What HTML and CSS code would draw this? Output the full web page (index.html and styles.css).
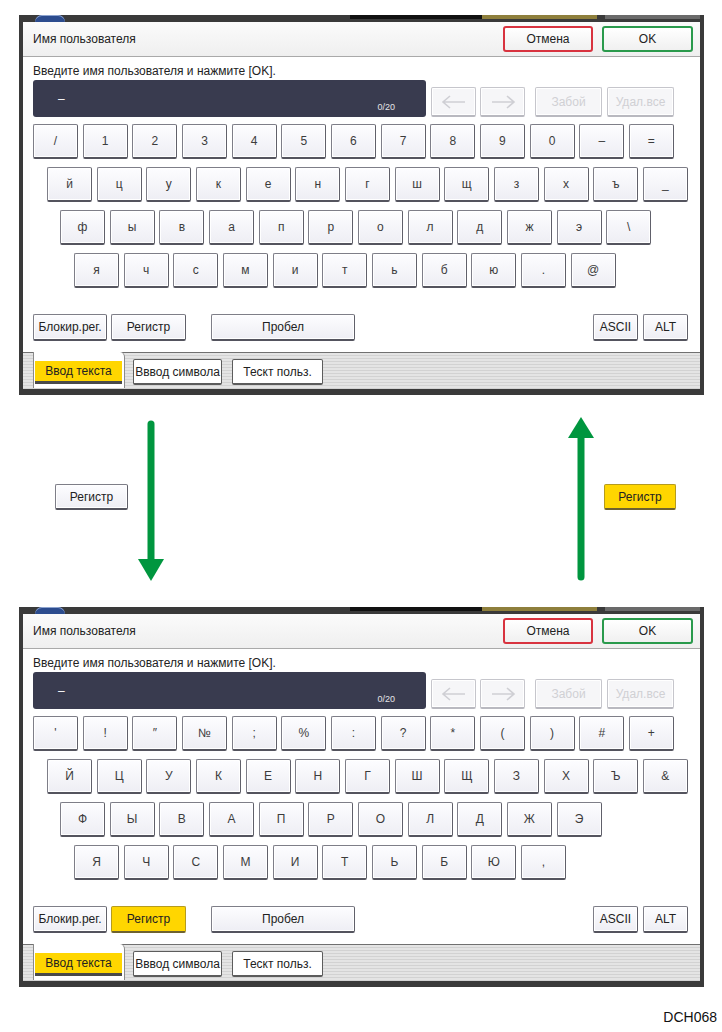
FILE: index.html
```html
<!DOCTYPE html>
<html lang="ru">
<head>
  <meta charset="UTF-8">
  <title>Ввод текста - Регистр</title>
  <link rel="stylesheet" href="styles.css">
</head>
<body>

  <!-- Screen 1: lower case -->
  <div class="screen">
    <div class="screen-top">
      <span class="lamp"></span>
      <span class="bar-black"></span>
      <span class="bar-gold"></span>
      <span class="bar-gray"></span>
    </div>
    <div class="dialog">
      <div class="title-bar">
        <h1>Имя пользователя</h1>
        <button class="btn-cancel">Отмена</button>
        <button class="btn-ok">OK</button>
      </div>
      <p class="prompt">Введите имя пользователя и нажмите [OK].</p>
      <div class="input-row">
        <div class="input"><span class="cursor">–</span><span class="counter">0/20</span></div>
        <span class="key off arrow first"><svg width="26" height="14" viewBox="0 0 26 14"><path d="M2 7H24M9 1L2 7L9 13" fill="none" stroke="#cfcfd4" stroke-width="1.6"/></svg></span>
        <span class="key off arrow"><svg width="26" height="14" viewBox="0 0 26 14"><path d="M2 7H24M17 1L24 7L17 13" fill="none" stroke="#cfcfd4" stroke-width="1.6"/></svg></span>
        <span class="key off wide gap">Забой</span>
        <span class="key off wide">Удал.все</span>
      </div>
      <div class="keys">
        <div class="row r1">
          <span class="key">/</span><span class="key">1</span><span class="key">2</span><span class="key">3</span><span class="key">4</span><span class="key">5</span><span class="key">6</span><span class="key">7</span><span class="key">8</span><span class="key">9</span><span class="key">0</span><span class="key">–</span><span class="key">=</span>
        </div>
        <div class="row r2">
          <span class="key">й</span><span class="key">ц</span><span class="key">у</span><span class="key">к</span><span class="key">е</span><span class="key">н</span><span class="key">г</span><span class="key">ш</span><span class="key">щ</span><span class="key">з</span><span class="key">х</span><span class="key">ъ</span><span class="key">_</span>
        </div>
        <div class="row r3">
          <span class="key">ф</span><span class="key">ы</span><span class="key">в</span><span class="key">а</span><span class="key">п</span><span class="key">р</span><span class="key">о</span><span class="key">л</span><span class="key">д</span><span class="key">ж</span><span class="key">э</span><span class="key">\</span>
        </div>
        <div class="row r4">
          <span class="key">я</span><span class="key">ч</span><span class="key">с</span><span class="key">м</span><span class="key">и</span><span class="key">т</span><span class="key">ь</span><span class="key">б</span><span class="key">ю</span><span class="key">.</span><span class="key">@</span>
        </div>
      </div>
      <div class="func-row">
        <span class="key f-lock">Блокир.рег.</span>
        <span class="key f-shift">Регистр</span>
        <span class="key f-space">Пробел</span>
        <span class="key f-ascii">ASCII</span>
        <span class="key f-alt">ALT</span>
      </div>
    </div>
    <div class="tabs">
      <div class="tab-active"><span class="tab-on">Ввод текста</span></div>
      <span class="tab t-symbol">Вввод символа</span>
      <span class="tab t-user">Тескт польз.</span>
    </div>
  </div>

  <!-- Shift switch -->
  <div class="switch">
    <span class="key reg">Регистр</span>
    <svg class="arrow-down" width="26" height="161" viewBox="0 0 26 161">
      <line x1="13" y1="4" x2="13" y2="142" stroke="#00963f" stroke-width="7" stroke-linecap="round"/>
      <polygon points="0,139 26,139 13,161" fill="#00963f"/>
    </svg>
    <svg class="arrow-up" width="26" height="164" viewBox="0 0 26 164">
      <polygon points="13,0 0,21 26,21" fill="#00963f"/>
      <line x1="13" y1="18" x2="13" y2="160" stroke="#00963f" stroke-width="7" stroke-linecap="round"/>
    </svg>
    <span class="key reg yellow">Регистр</span>
  </div>

  <!-- Screen 2: upper case -->
  <div class="screen">
    <div class="screen-top">
      <span class="lamp"></span>
      <span class="bar-black"></span>
      <span class="bar-gold"></span>
      <span class="bar-gray"></span>
    </div>
    <div class="dialog">
      <div class="title-bar">
        <h1>Имя пользователя</h1>
        <button class="btn-cancel">Отмена</button>
        <button class="btn-ok">OK</button>
      </div>
      <p class="prompt">Введите имя пользователя и нажмите [OK].</p>
      <div class="input-row">
        <div class="input"><span class="cursor">–</span><span class="counter">0/20</span></div>
        <span class="key off arrow first"><svg width="26" height="14" viewBox="0 0 26 14"><path d="M2 7H24M9 1L2 7L9 13" fill="none" stroke="#cfcfd4" stroke-width="1.6"/></svg></span>
        <span class="key off arrow"><svg width="26" height="14" viewBox="0 0 26 14"><path d="M2 7H24M17 1L24 7L17 13" fill="none" stroke="#cfcfd4" stroke-width="1.6"/></svg></span>
        <span class="key off wide gap">Забой</span>
        <span class="key off wide">Удал.все</span>
      </div>
      <div class="keys">
        <div class="row r1">
          <span class="key">'</span><span class="key">!</span><span class="key">″</span><span class="key">№</span><span class="key">;</span><span class="key">%</span><span class="key">:</span><span class="key">?</span><span class="key">*</span><span class="key">(</span><span class="key">)</span><span class="key">#</span><span class="key">+</span>
        </div>
        <div class="row r2">
          <span class="key">Й</span><span class="key">Ц</span><span class="key">У</span><span class="key">К</span><span class="key">Е</span><span class="key">Н</span><span class="key">Г</span><span class="key">Ш</span><span class="key">Щ</span><span class="key">З</span><span class="key">Х</span><span class="key">Ъ</span><span class="key">&amp;</span>
        </div>
        <div class="row r3">
          <span class="key">Ф</span><span class="key">Ы</span><span class="key">В</span><span class="key">А</span><span class="key">П</span><span class="key">Р</span><span class="key">О</span><span class="key">Л</span><span class="key">Д</span><span class="key">Ж</span><span class="key">Э</span>
        </div>
        <div class="row r4">
          <span class="key">Я</span><span class="key">Ч</span><span class="key">С</span><span class="key">М</span><span class="key">И</span><span class="key">Т</span><span class="key">Ь</span><span class="key">Б</span><span class="key">Ю</span><span class="key">,</span>
        </div>
      </div>
      <div class="func-row">
        <span class="key f-lock">Блокир.рег.</span>
        <span class="key f-shift yellow">Регистр</span>
        <span class="key f-space">Пробел</span>
        <span class="key f-ascii">ASCII</span>
        <span class="key f-alt">ALT</span>
      </div>
    </div>
    <div class="tabs">
      <div class="tab-active"><span class="tab-on">Ввод текста</span></div>
      <span class="tab t-symbol">Вввод символа</span>
      <span class="tab t-user">Тескт польз.</span>
    </div>
  </div>

  <div class="fig-id">DCH068</div>

</body>
</html>
```

FILE: styles.css
```css
body {
  margin: 0;
  background: #fff;
  font-family: "Liberation Sans", Arial, sans-serif;
  font-size: 12px;
  color: #222;
  width: 722px;
}

/* Screen frame */
.screen {
  margin: 15px 0 0 19px;
  width: 685px;
  height: 380px;
  box-sizing: border-box;
  background: #3a3a3a;
  padding: 0 4px 6px;
  display: flex;
  flex-direction: column;
}

.switch + .screen {
  margin-top: 0;
}

.screen-top {
  height: 7px;
  display: flex;
  align-items: flex-start;
}

.lamp {
  width: 30px;
  height: 7px;
  margin-left: 12px;
  background: #2c4c8e;
  border-radius: 15px 15px 0 0;
  box-shadow: inset 0 1px 0 #8ea4cf;
}

.bar-black {
  width: 132px;
  height: 4px;
  margin-left: 285px;
  background: #111;
}

.bar-gold {
  width: 115px;
  height: 4px;
  background: #8e7f3c;
}

.bar-gray {
  width: 95px;
  height: 4px;
  margin-left: 8px;
  background: #6a6a6a;
}

/* Dialog */
.dialog {
  background: #fff;
  height: 330px;
  display: flex;
  flex-direction: column;
}

.title-bar {
  height: 35px;
  box-sizing: border-box;
  border-bottom: 1px solid #a9a9a9;
  background: linear-gradient(#fbfbfb, #efefef);
  display: flex;
  align-items: center;
  padding: 0 7px 0 10px;
}

.title-bar h1 {
  flex: 1;
  margin: 0;
  font-size: 12px;
  font-weight: normal;
  color: #222;
}

.btn-cancel,
.btn-ok {
  height: 26px;
  box-sizing: border-box;
  border-radius: 3px;
  background: linear-gradient(#ffffff, #f0f0f0);
  font-family: "Liberation Sans", Arial, sans-serif;
  font-size: 12px;
  color: #222;
  padding: 0;
}

.btn-cancel {
  width: 90px;
  margin-right: 9px;
  border: 2px solid #d8333f;
}

.btn-ok {
  width: 91px;
  border: 2px solid #2a9a4c;
}

.prompt {
  margin: 7px 0 0 10px;
  line-height: 14px;
}

.input-row {
  display: flex;
  align-items: flex-end;
  height: 37px;
  margin-top: 2px;
}

.input {
  width: 393px;
  height: 37px;
  margin-left: 10px;
  box-sizing: border-box;
  background: #393b4f;
  border-radius: 3px;
  display: flex;
  justify-content: space-between;
  padding: 0 31px 0 25px;
  color: #fff;
}

.cursor {
  align-self: center;
  font-size: 12px;
}

.counter {
  align-self: flex-end;
  margin-bottom: 5px;
  font-size: 9px;
  color: #e4e4e8;
}

/* Keys */
.key {
  width: 45px;
  height: 35px;
  box-sizing: border-box;
  border: 1px solid #7e7e88;
  border-bottom: 2px solid #54545e;
  border-right-color: #60606a;
  border-radius: 2px;
  background: linear-gradient(#fdfdff, #eeeef4);
  box-shadow: inset 0 0 0 1px #fff;
  display: flex;
  align-items: center;
  justify-content: center;
  font-size: 12px;
  color: #3c3c3c;
  flex-shrink: 0;
}

.key.off {
  height: 30px;
  border-color: #c6c6cc;
  border-bottom-color: #b9b9c0;
  background: #f6f6f8;
  color: #d0d0d4;
}

.key.arrow {
  margin-left: 4px;
}

.key.arrow.first {
  margin-left: 5px;
}

.key.wide {
  width: 67px;
  margin-left: 5px;
}

.key.wide.gap {
  margin-left: 10px;
}

.keys {
  display: flex;
  flex-direction: column;
  gap: 8px;
  margin-top: 7px;
}

.row {
  display: flex;
  gap: 4.67px;
}

.r1 { margin-left: 10px; }
.r2 { margin-left: 24px; }
.r3 { margin-left: 37px; }
.r4 { margin-left: 51px; }

.func-row {
  display: flex;
  margin: 26px 12px 0 10px;
}

.func-row .key {
  height: 27px;
  color: #222;
}

.f-lock { width: 74px; }
.f-shift { width: 75px; margin-left: 4px; }
.f-space { width: 144px; margin-left: 25px; }
.f-ascii { margin-left: auto; }
.f-alt { margin-left: 5px; }

.key.yellow {
  background: #ffd600;
  border-color: #b59b1e;
  border-bottom-color: #6e6230;
  box-shadow: none;
  color: #222;
}

/* Tabs */
.tabs {
  height: 37px;
  box-sizing: border-box;
  border-top: 1px solid #707070;
  background: repeating-linear-gradient(#e4e4e4 0 2px, #d2d2d2 2px 3px);
  display: flex;
  align-items: flex-start;
  padding-left: 10px;
}

.tab-active {
  width: 92px;
  height: 36px;
  margin-top: -1px;
  box-sizing: border-box;
  background: #fff;
  border-left: 1px solid #8a8a8a;
  border-right: 1px solid #8a8a8a;
  border-top-right-radius: 5px;
  padding: 9px 0 0 1px;
}

.tab-on {
  display: flex;
  align-items: center;
  justify-content: center;
  width: 87px;
  height: 23px;
  box-sizing: border-box;
  background: #ffd600;
  border-bottom: 3px solid #4a4a4a;
  color: #222;
}

.tab {
  height: 26px;
  margin-top: 6px;
  box-sizing: border-box;
  background: #fff;
  border: 1px solid #5c5c5c;
  border-bottom-width: 2px;
  border-radius: 2px;
  display: flex;
  align-items: center;
  justify-content: center;
  color: #222;
}

.t-symbol { width: 89px; margin-left: 8px; }
.t-user { width: 91px; margin-left: 10px; }

/* Shift switch between screens */
.switch {
  display: flex;
  align-items: flex-start;
  height: 212px;
}

.key.reg {
  width: 73px;
  height: 26px;
  margin: 89px 0 0 55px;
  color: #222;
}

.key.reg.yellow {
  width: 72px;
  margin: 89px 46px 0 10px;
}

.arrow-down {
  margin: 25px 0 0 10px;
}

.arrow-up {
  margin: 22px 0 0 auto;
}

.fig-id {
  margin-top: 22px;
  padding-right: 5px;
  text-align: right;
  font-size: 14px;
  line-height: 16px;
  color: #111;
}
```
